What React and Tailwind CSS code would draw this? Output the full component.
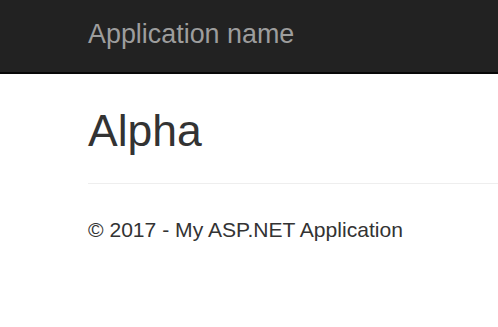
export default function App() {
  return (
    <div className="min-h-[327px] bg-white font-['Liberation_Sans',Arial,sans-serif] text-[#333]">
      <nav className="h-[74px] border-b-2 border-[#080808] bg-[#222] pl-[88px] pt-[21px]">
        <a href="#" className="block text-[26.9px] leading-none text-[#9d9d9d]">
          Application name
        </a>
      </nav>
      <div className="pl-[88px]">
        <h2 className="mt-[35px] text-[44.5px] leading-none">Alpha</h2>
        <hr className="mt-[29px] border-t border-[#eee]" />
        <footer>
          <p className="mt-[35px] text-[21.1px] leading-none">&copy; 2017 - My ASP.NET Application</p>
        </footer>
      </div>
    </div>
  );
}
